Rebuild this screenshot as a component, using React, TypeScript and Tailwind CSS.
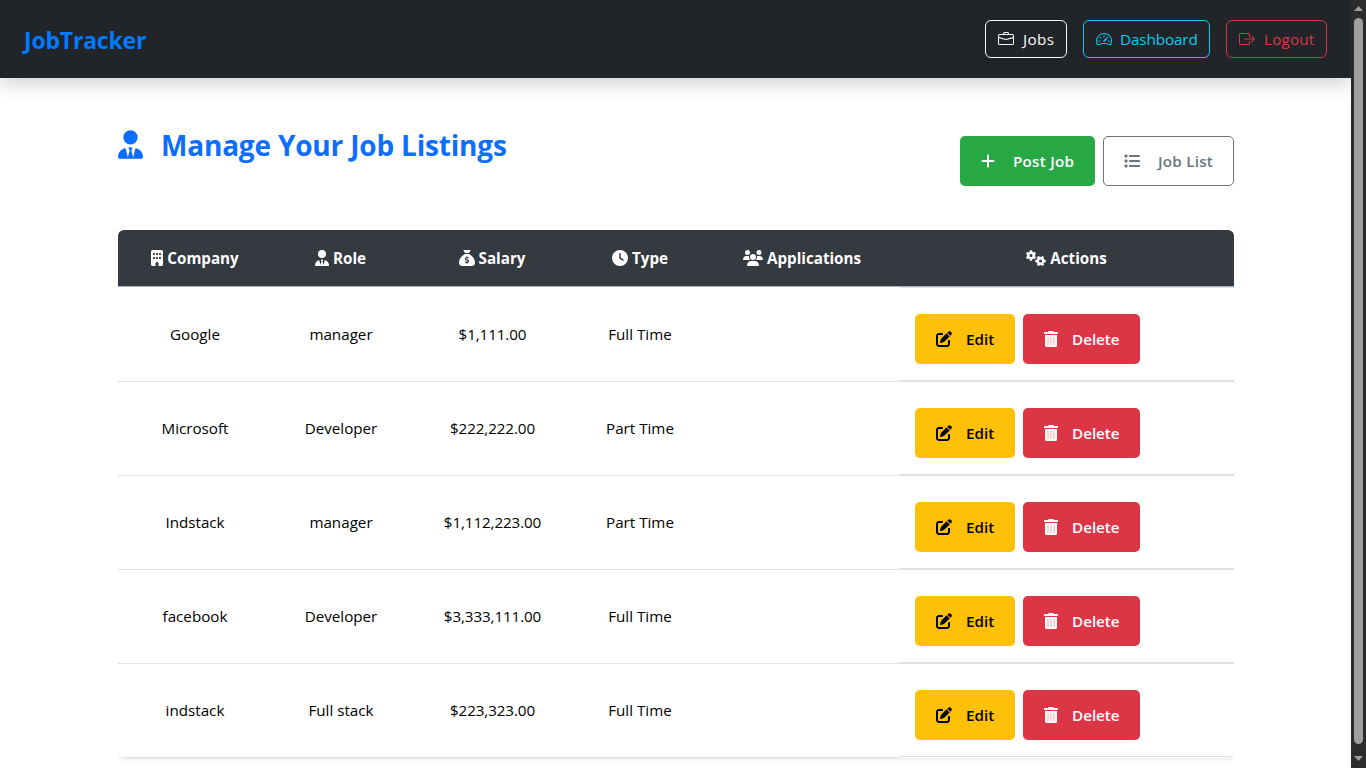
import React from "react";
import {
  FaBuilding,
  FaUserTie,
  FaSackDollar,
  FaClock,
  FaUsers,
  FaGears,
  FaPlus,
  FaList,
  FaPenToSquare,
} from "react-icons/fa6";
import { BsBriefcase, BsSpeedometer2, BsBoxArrowRight } from "react-icons/bs";

type Job = { company: string; role: string; salary: string; type: string };

const jobs: Job[] = [
  { company: "Google", role: "manager", salary: "$1,111.00", type: "Full Time" },
  { company: "Microsoft", role: "Developer", salary: "$222,222.00", type: "Part Time" },
  { company: "Indstack", role: "manager", salary: "$1,112,223.00", type: "Part Time" },
  { company: "facebook", role: "Developer", salary: "$3,333,111.00", type: "Full Time" },
  { company: "indstack", role: "Full stack", salary: "$223,323.00", type: "Full Time" },
];

const columns = "grid grid-cols-[154px_137px_166px_130px_194px_335px]";

function Navbar() {
  return (
    <header className="z-10 flex h-[78px] shrink-0 items-center justify-between bg-[#212529] px-6 shadow-[0_8px_16px_rgba(0,0,0,0.15)]">
      <a className="pt-0.5 text-[23px] leading-[34px] font-bold tracking-[-0.2px] text-[#007bff]">JobTracker</a>
      <nav className="flex gap-4 text-[15.3px] leading-6">
        <a className="flex h-[38px] w-[82px] items-center gap-2 rounded-md border border-[#f8f9fa] pl-3 text-[#f8f9fa]">
          <BsBriefcase className="size-4 shrink-0" />
          <span className="pl-px tracking-[0.4px]">Jobs</span>
        </a>
        <a className="flex h-[38px] w-[127px] items-center gap-2 rounded-md border border-[#0dcaf0] pl-3 text-[#0dcaf0]">
          <BsSpeedometer2 className="size-4 shrink-0" />
          <span className="tracking-[-0.15px]">Dashboard</span>
        </a>
        <a className="flex h-[38px] w-[101px] items-center gap-2 rounded-md border border-[#dc3545] pl-3 text-[#dc3545]">
          <BsBoxArrowRight className="size-4 shrink-0" />
          <span className="pl-px tracking-[0.15px]">Logout</span>
        </a>
      </nav>
    </header>
  );
}

function HeadCell({ icon, label }: { icon: React.ReactNode; label: string }) {
  return (
    <div className="flex items-center justify-center gap-1">
      {icon}
      <span>{label}</span>
    </div>
  );
}

function TrashIcon() {
  return (
    <svg className="h-4 w-[14px] shrink-0" viewBox="0 0 14 16" fill="currentColor">
      <path d="M4.200.6Q4.500 0 5.100 0h3.800q.6 0 .9.6l.2.4h3.500q.5 0 .5.500v1q0 .5-.5.500h-13Q0 3 0 2.500v-1Q0 1 .5 1H4z" />
      <path d="M1 4h12v10.500q0 1.500-1.500 1.500h-9Q1 16 1 14.500z" />
      <path d="M3.500 6h1v8h-1zM6.500 6h1v8h-1zM9.500 6h1v8h-1z" fill="#f2a9a9" />
    </svg>
  );
}

function JobRow({ job, first }: { job: Job; first: boolean }) {
  const cell = first ? "border-t border-transparent pt-[34px]" : "border-t border-[#dee2e6] pt-[34px]";
  return (
    <div className={`${columns} h-[94px] text-center text-[15.2px] leading-6 text-black`}>
      <div className={cell}>{job.company}</div>
      <div className={`${cell} pl-px`}>{job.role}</div>
      <div className={`${cell} pl-px tracking-[-0.1px]`}>{job.salary}</div>
      <div className={cell}>{job.type}</div>
      <div className={cell} />
      <div className="flex gap-2 border-y border-[#dee2e6] pt-[26px] pl-4 font-semibold">
        <button className="flex h-[50px] w-[100px] items-center gap-[14px] rounded-[5px] bg-[#ffc107] pl-[21px] text-black">
          <FaPenToSquare className="size-4 shrink-0" />
          <span>Edit</span>
        </button>
        <button className="flex h-[50px] w-[117px] items-center gap-[14px] rounded-[5px] bg-[#dc3545] pl-[21px] text-white">
          <TrashIcon />
          <span>Delete</span>
        </button>
      </div>
    </div>
  );
}

function Scrollbar() {
  return (
    <div className="flex h-full w-[15px] shrink-0 flex-col items-center bg-[#2c2c2c]">
      <svg className="h-[18px] w-[15px] shrink-0" viewBox="0 0 15 18" fill="#9f9f9f">
        <path d="M3 11h9L7.500 6z" />
      </svg>
      <div className="h-[726px] w-[9px] rounded-full bg-[#9f9f9f]" />
      <svg className="h-6 w-[15px] shrink-0" viewBox="0 0 15 24" fill="#9f9f9f">
        <path d="M3 12h9l-4.500 5z" />
      </svg>
    </div>
  );
}

export default function App() {
  return (
    <div className="flex h-[768px] w-[1366px] overflow-hidden bg-white font-['Open_Sans','Noto_Sans',sans-serif]">
      <div className="flex min-w-0 grow flex-col overflow-hidden">
        <Navbar />
        <main className="ml-[118px] w-[1116px] pt-12">
          <div className="flex items-start justify-between">
            <h1 className="flex h-[38px] items-center gap-[18px] text-[28px] font-bold tracking-[-0.19px] whitespace-nowrap text-[#0d6efd]">
              <FaUserTie className="mb-px h-[29px] w-[25px]" />
              <span>Manage Your Job Listings</span>
            </h1>
            <div className="mt-[10px] flex gap-2 text-[15.2px] leading-6 font-semibold tracking-[0.25px]">
              <button className="flex h-[50px] w-[135px] items-center gap-[18px] rounded-[5px] bg-[#28a745] pl-[21px] text-white">
                <FaPlus className="h-4 w-[14px] shrink-0" />
                <span>Post Job</span>
              </button>
              <button className="flex h-[50px] w-[131px] items-center gap-[18px] rounded-[5px] border border-[#6c757d] pl-5 text-[#6c757d]">
                <FaList className="size-4 shrink-0" />
                <span>Job List</span>
              </button>
            </div>
          </div>
          <div className="mt-11 overflow-x-clip">
            <section className="overflow-hidden rounded-md shadow-[0_2px_4px_rgba(0,0,0,0.075)]">
              <div className={`${columns} h-[57px] border-b border-[#a6b5cc] bg-[#343a40] text-[15.2px] leading-6 font-bold text-white`}>
                <HeadCell icon={<FaBuilding className="h-4 w-3" />} label="Company" />
                <HeadCell icon={<FaUserTie className="h-4 w-[14px]" />} label="Role" />
                <HeadCell icon={<FaSackDollar className="size-4" />} label="Salary" />
                <HeadCell icon={<FaClock className="size-4" />} label="Type" />
                <HeadCell icon={<FaUsers className="h-4 w-5" />} label="Applications" />
                <HeadCell icon={<FaGears className="h-4 w-5" />} label="Actions" />
              </div>
              {jobs.map((job, index) => (
                <JobRow key={job.company} job={job} first={index === 0} />
              ))}
              <div className="h-px w-[781px] bg-[#dee2e6]" />
            </section>
          </div>
        </main>
      </div>
      <Scrollbar />
    </div>
  );
}
